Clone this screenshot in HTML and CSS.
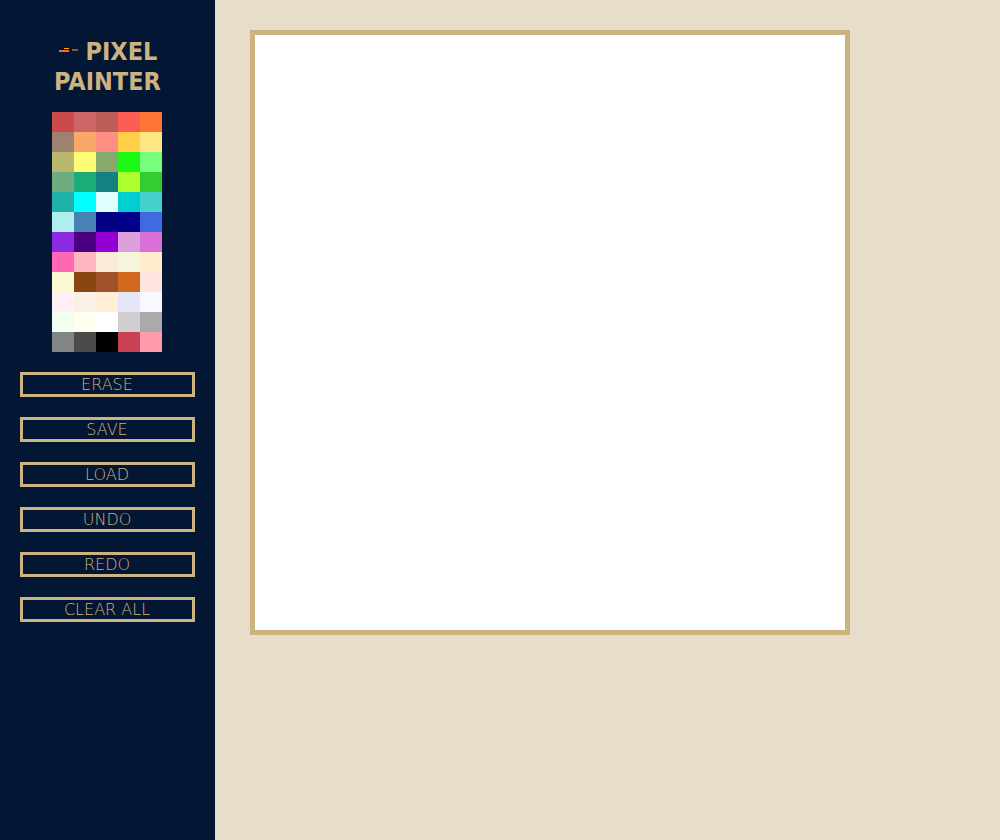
FILE: index.html
```html
<!DOCTYPE html>
<html lang="en">
<head>
<meta charset="utf-8">
<meta name="viewport" content="width=device-width, initial-scale=1">
<title>Pixel Painter</title>
<link rel="stylesheet" href="styles.css">
</head>
<body>
<div class="app">
  <aside class="sidebar">
    <h1 class="title"><svg class="logo" viewBox="0 0 20 6" aria-hidden="true" shape-rendering="crispEdges"><rect x="6" y="1" width="5" height="1" fill="#fa0"/><rect x="1" y="3" width="10" height="2" fill="#f56a20"/><rect x="14" y="2" width="6" height="2" fill="#8c5a35"/></svg> PIXEL PAINTER</h1>
    <div class="palette" role="group" aria-label="Colors"></div>
    <div class="tools">
      <button class="tool" type="button">ERASE</button>
      <button class="tool" type="button">SAVE</button>
      <button class="tool" type="button">LOAD</button>
      <button class="tool" type="button">UNDO</button>
      <button class="tool" type="button">REDO</button>
      <button class="tool" type="button">CLEAR ALL</button>
    </div>
  </aside>
  <main class="workspace">
    <canvas class="board" width="590" height="595" aria-label="Drawing board"></canvas>
  </main>
</div>
<script src="script.js"></script>
</body>
</html>
```
FILE: styles.css
```css
* {
  box-sizing: border-box;
}

body {
  margin: 0;
  background: #e8ddcb;
  font-family: "DejaVu Sans", sans-serif;
}

.app {
  display: flex;
  min-height: 100vh;
}

.sidebar {
  flex: 0 0 215px;
  padding: 37px 20px 20px;
  background: #031634;
  color: #cdb380;
}

.title {
  margin: 0 0 15px;
  font-family: "DejaVu Sans Condensed", "DejaVu Sans", sans-serif;
  font-stretch: condensed;
  font-size: 25px;
  font-weight: bold;
  line-height: 30px;
  text-align: center;
}

.logo {
  width: 20px;
  height: 6px;
  vertical-align: 7px;
}

.palette {
  display: grid;
  grid-template-columns: repeat(5, 22px);
  grid-auto-rows: 20px;
  width: 110px;
  margin: 0 32px 20px;
}

.swatch {
  padding: 0;
  border: 0;
}

.tools {
  display: grid;
  gap: 20px;
}

.tool {
  height: 25px;
  padding: 0 1px 0 0;
  border: 3px solid #cdb380;
  background: transparent;
  color: #cdb380;
  font-family: "DejaVu Sans", sans-serif;
  font-size: 16px;
  font-weight: 200;
  line-height: 19px;
}

.workspace {
  flex: 1;
  min-width: 0;
  padding: 30px 35px;
}

.board {
  display: block;
  width: 100%;
  max-width: 600px;
  border: 5px solid #cdb380;
  background: #fff;
}
```
FILE: script.js
```js
const colors = [
  "#cd4a4a", "#cc6666", "#bc5d58", "#fd5e53", "#ff7538",
  "#9f8170", "#faa76c", "#ff8e85", "#ffcf48", "#fce883",
  "#bab86c", "#fdfc74", "#87a96b", "#1df914", "#76ff7a",
  "#6dae81", "#1cac78", "#158084", "#adff2f", "#32cd32",
  "#20b2aa", "#00ffff", "#e0ffff", "#00ced1", "#48d1cc",
  "#afeeee", "#4682b4", "#000080", "#00008b", "#4169e1",
  "#8a2be2", "#4b0082", "#9400d3", "#dda0dd", "#da70d6",
  "#ff69b4", "#ffb6c1", "#faebd7", "#f5f5dc", "#ffebcd",
  "#fafad2", "#8b4513", "#a0522d", "#d2691e", "#ffe4e1",
  "#fff0f5", "#faf0e6", "#ffefd5", "#e6e6fa", "#f8f8ff",
  "#f0fff0", "#fffff0", "#ffffff", "#cfcfcf", "#aaaaaa",
  "#828485", "#4a4c4a", "#000000", "#cb4154", "#ff9baa"
];

const palette = document.querySelector(".palette");
for (const color of colors) {
  const swatch = document.createElement("button");
  swatch.type = "button";
  swatch.className = "swatch";
  swatch.style.backgroundColor = color;
  swatch.setAttribute("aria-label", color);
  palette.append(swatch);
}
```
